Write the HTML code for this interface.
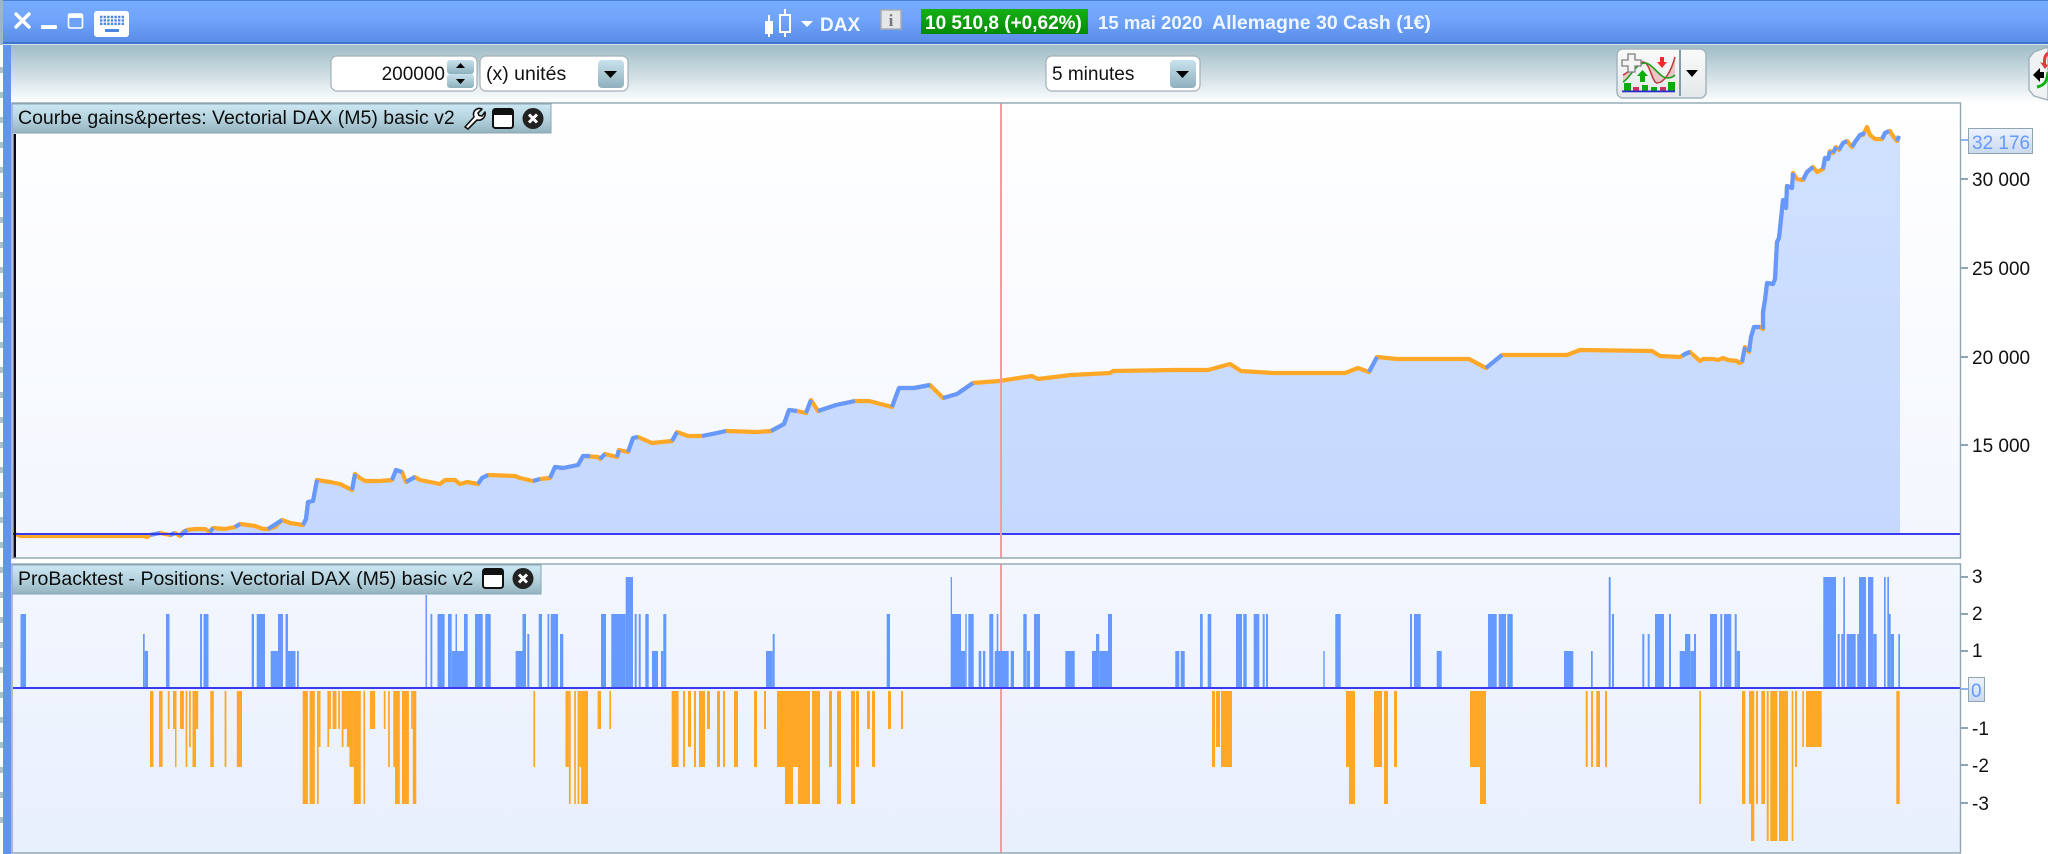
<!DOCTYPE html>
<html><head><meta charset="utf-8"><title>DAX</title>
<style>
html,body{margin:0;padding:0;background:#fff;width:2048px;height:854px;overflow:hidden}
svg{display:block;position:absolute;left:0;top:0}
text{font-family:"Liberation Sans",sans-serif}
</style></head><body>
<svg width="2048" height="854" viewBox="0 0 2048 854" xmlns="http://www.w3.org/2000/svg">
<defs>
<linearGradient id="tb" x1="0" y1="0" x2="0" y2="1"><stop offset="0" stop-color="#78acff"/><stop offset=".45" stop-color="#70a4fa"/><stop offset="1" stop-color="#588ce6"/></linearGradient>
<linearGradient id="tl" x1="0" y1="0" x2="0" y2="1"><stop offset="0" stop-color="#9fbcc6"/><stop offset=".55" stop-color="#d2e0e5"/><stop offset="1" stop-color="#fff"/></linearGradient>
<linearGradient id="p1" x1="0" y1="0" x2="0" y2="1"><stop offset="0" stop-color="#fff"/><stop offset="1" stop-color="#f2f6fe"/></linearGradient>
<linearGradient id="p2" x1="0" y1="0" x2="0" y2="1"><stop offset="0" stop-color="#f3f7fe"/><stop offset="1" stop-color="#e8effd"/></linearGradient>
<linearGradient id="ar" x1="0" y1="0" x2="0" y2="1"><stop offset="0" stop-color="#d0e1ff"/><stop offset="1" stop-color="#c5d8fe"/></linearGradient>
<linearGradient id="lg" x1="0" y1="0" x2="0" y2="1"><stop offset="0" stop-color="#cbe7f3"/><stop offset=".5" stop-color="#b5d3de"/><stop offset="1" stop-color="#93b3bf"/></linearGradient>
<linearGradient id="bt" x1="0" y1="0" x2="0" y2="1"><stop offset="0" stop-color="#c8e2ed"/><stop offset="1" stop-color="#8db0bd"/></linearGradient>
<linearGradient id="gr" x1="0" y1="0" x2="0" y2="1"><stop offset="0" stop-color="#16b016"/><stop offset="1" stop-color="#058a05"/></linearGradient>
<linearGradient id="lb" x1="0" y1="0" x2="0" y2="1"><stop offset="0" stop-color="#edf3fd"/><stop offset="1" stop-color="#c9d9ee"/></linearGradient>
<linearGradient id="ib" x1="0" y1="0" x2="0" y2="1"><stop offset="0" stop-color="#fafafa"/><stop offset="1" stop-color="#e4e8ea"/></linearGradient>
</defs>

<!-- left strip -->
<rect x="0" y="0" width="3" height="854" fill="#fff"/>
<rect x="0" y="0" width="3" height="45" fill="#9db8c2"/>
<path d="M0 70h3M0 95h3M0 120h3M0 145h3M0 170h3M0 195h3M0 220h3M0 245h3M0 270h3M0 295h3M0 320h3M0 345h3M0 370h3M0 395h3M0 420h3M0 445h3M0 470h3M0 495h3M0 520h3M0 545h3M0 570h3M0 595h3M0 620h3M0 645h3M0 670h3M0 695h3M0 720h3M0 745h3M0 770h3M0 795h3M0 820h3" stroke="#8aa7b8" stroke-width="6" fill="none" opacity=".7"/>
<rect x="3" y="43" width="8" height="811" fill="#5f95ec"/>
<rect x="11" y="45" width="1" height="809" fill="#e6edf5"/>

<!-- title bar -->
<rect x="3" y="0" width="2045" height="43" fill="url(#tb)"/>
<rect x="3" y="0" width="2045" height="1" fill="#4a7fd6"/>
<rect x="3" y="42" width="2045" height="2" fill="#3f74cc"/>
<rect x="3" y="44" width="2045" height="1" fill="#d4e2f0"/>

<path d="M16 14L29 27M29 14L16 27" stroke="#fff" stroke-width="3.4" stroke-linecap="round"/>
<rect x="41" y="25" width="16" height="4" rx="1" fill="#fff"/>
<rect x="68.500" y="14" width="14" height="14" rx="1.500" fill="#6ea2f6" stroke="#fff" stroke-width="1.600"/>
<rect x="68" y="14" width="15" height="4" fill="#fff"/>
<rect x="94" y="11" width="35" height="26" rx="3" fill="#fff"/>
<path d="M100 17h2.400M103.600 17h2.400M107.200 17h2.400M110.800 17h2.400M114.400 17h2.400M118 17h2.400M121.600 17h2.400M100 20.400h2.400M103.600 20.400h2.400M107.200 20.400h2.400M110.800 20.400h2.400M114.400 20.400h2.400M118 20.400h2.400M121.600 20.400h2.400M100 23.800h2.400M103.600 23.800h2.400M107.200 23.800h2.400M110.800 23.800h2.400M114.400 23.800h2.400M118 23.800h2.400M121.600 23.800h2.400" stroke="#4f86e0" stroke-width="2.400" fill="none"/>
<rect x="105" y="29" width="14" height="3" fill="#4f86e0"/>

<path d="M769 15V37" stroke="#fff" stroke-width="2"/>
<rect x="765" y="21" width="8" height="13" fill="#fff"/>
<rect x="780" y="15" width="10" height="17" fill="none" stroke="#fff" stroke-width="2"/>
<path d="M785 9V15M785 32V37" stroke="#fff" stroke-width="2"/>
<path d="M801 21h12l-6 6z" fill="#fff"/>
<text x="820" y="31" font-size="19" font-weight="bold" fill="#f4f8ff">DAX</text>
<rect x="881" y="10" width="20" height="19" fill="#e4e6e8" stroke="#a9adb3" stroke-width="1.500"/>
<text x="891" y="26" font-size="17" font-weight="bold" text-anchor="middle" fill="#777" style="font-family:'Liberation Serif',serif">i</text>
<rect x="921" y="9" width="167" height="25" fill="url(#gr)"/>
<text x="925" y="29" font-size="19" font-weight="bold" fill="#fff">10 510,8 (+0,62%)</text>
<text x="1098" y="29" font-size="18.600" font-weight="bold" fill="#f0f6ff">15 mai 2020</text>
<text x="1212" y="29" font-size="19.500" font-weight="bold" fill="#f0f6ff">Allemagne 30 Cash (1€)</text>

<!-- toolbar -->
<rect x="11" y="45" width="2037" height="58" fill="url(#tl)"/>
<rect x="331" y="56" width="146" height="35" rx="6" fill="#fff" stroke="#a4b0b6" stroke-width="1.200"/>
<text x="445" y="80" font-size="19" text-anchor="end" fill="#111">200000</text>
<rect x="447" y="60" width="27" height="14" rx="3" fill="url(#bt)"/>
<rect x="447" y="74" width="27" height="14" rx="3" fill="url(#bt)"/>
<path d="M456 68h9l-4.500-5zM456 79h9l-4.500 5z" fill="#000"/>
<rect x="480" y="56" width="148" height="35" rx="6" fill="#fff" stroke="#a4b0b6" stroke-width="1.200"/>
<text x="486" y="80" font-size="19.500" fill="#111">(x) unités</text>
<rect x="598" y="60" width="26" height="28" rx="4" fill="url(#bt)"/>
<path d="M604 71h13l-6.500 7z" fill="#000"/>
<rect x="1046" y="56" width="154" height="35" rx="6" fill="#fff" stroke="#a4b0b6" stroke-width="1.200"/>
<text x="1052" y="80" font-size="19" fill="#111">5 minutes</text>
<rect x="1170" y="60" width="26" height="28" rx="4" fill="url(#bt)"/>
<path d="M1176 71h13l-6.500 7z" fill="#000"/>

<rect x="1617" y="49" width="89" height="49" rx="6" fill="url(#ib)" stroke="#a4b6be" stroke-width="1.500"/>
<rect x="1679" y="50" width="2" height="46" fill="#7f9daa"/>
<path d="M1686 70h12l-6 7z" fill="#000"/>
<g>
<path d="M1623 75C1630 72 1636 62 1643 62C1650 62 1652 83 1657 83C1664 83 1671 72 1675 57L1675 75C1671 78 1668 78 1667 78C1660 78 1652 63 1645 63C1636 63 1630 78 1623 82Z" fill="#e8bcbc" opacity=".8"/>
<path d="M1623 75C1630 72 1636 62 1643 62C1650 62 1652 83 1657 83C1664 83 1671 72 1675 57" fill="none" stroke="#c0383a" stroke-width="1.500"/>
<path d="M1623 82C1630 78 1636 63 1645 63C1652 63 1660 78 1667 78C1670 78 1673 77 1675 75" fill="none" stroke="#1da01d" stroke-width="1.600"/>
<path d="M1628 54h7v6h6v6h-6v6h-7v-6h-6v-6h6z" fill="#f4f4f4" stroke="#7f7f7f" stroke-width="1.300"/>
<path d="M1640 82h5v-6h3l-5.500-6-5.500 6h3z" fill="#0cae0c"/>
<path d="M1660 57h4v5h3l-5 6-5-6h3z" fill="#ee2a2a"/>
<rect x="1624" y="83" width="7" height="8" fill="#0caa0c"/><rect x="1633" y="87" width="6" height="4" fill="#d0305a"/><rect x="1642" y="85" width="6" height="6" fill="#0caa0c"/><rect x="1651" y="87" width="6" height="4" fill="#0caa0c"/><rect x="1660" y="87" width="6" height="4" fill="#d0305a"/><rect x="1668" y="82" width="7" height="9" fill="#0caa0c"/>
<rect x="1622" y="90.500" width="53" height="1.800" fill="#2a2ad0"/>
</g>
<path d="M2048 47L2034 52L2029 58V90L2034 96L2048 100Z" fill="#eef2f3" stroke="#9fb2ba" stroke-width="1.400"/>
<path d="M2033 75l7-7v14z" fill="#000"/>
<rect x="2040" y="72" width="4" height="6" fill="#000"/>
<path d="M2048 53C2044 56 2044 62 2045 67" stroke="#e23a3a" stroke-width="3" fill="none"/>
<path d="M2040 62l5 7 3-4z" fill="#e23a3a"/>
<path d="M2048 72C2047 80 2046 85 2037 87" stroke="#11b011" stroke-width="3" fill="none"/>

<!-- panel 1 -->
<rect x="12" y="103" width="1948" height="455" fill="url(#p1)"/>
<path d="M16 534L20 536L143 536L147 537L150 535L160 533L170 535L175 533L180 536L183 532L187 530L195 529L205 529L210 532L213 528L225 529L235 527L240 524L255 526L263 529L268 529L275 527L282 520L290 523L303 525L306 519L308 502L313 501L317 480L330 482L340 484L352 490L355 474L360 478L365 481L380 481L392 480L396 470L402 472L406 482L415 477L420 480L440 484L445 480L455 480L460 484L467 482L478 484L482 478L488 475L515 476L520 478L533 481L540 479L550 478L555 467L563 468L578 465L583 456L598 457L600 459L605 454L617 457L619 450L628 452L633 438L638 437L652 443L672 441L677 432L688 436L702 436L717 433L726 431L757 432L771 431L784 424L789 410L797 411L806 413L811 400L818 411L836 405L855 401L869 401L892 407L899 388L914 388L930 385L943 398L957 394L973 383L999 381L1032 376L1038 379L1071 375L1110 373L1113 371L1175 370L1208 370L1230 364L1241 371L1273 373L1345 373L1358 368L1369 372L1377 357L1397 359L1469 359L1486 368L1502 355L1521 355L1567 355L1580 350L1652 351L1660 356L1680 357L1685 354L1690 352L1700 361L1703 359L1713 359L1718 360L1723 358L1728 360L1737 361L1739 363L1742 362L1745 347L1749 352L1751 337L1754 327L1760 327L1763 329L1763 312L1765 300L1767 283L1773 284L1775 279L1777 242L1779 238L1783 200L1786 208L1787 186L1792 188L1793 173L1797 179L1803 180L1807 172L1813 167L1817 172L1823 169L1825 158L1828 159L1830 151L1833 153L1836 147L1839 150L1843 143L1847 141L1852 147L1855 142L1860 135L1863 135L1867 127L1870 135L1875 139L1882 139L1885 133L1890 131L1893 136L1897 141L1899 136L1900 136L1900 534L16 534Z" fill="url(#ar)"/>
<path d="M16 534L20 536L143 536L147 537L150 535L160 533L170 535L175 533L180 536L183 532L187 530L195 529L205 529L210 532L213 528L225 529L235 527L240 524L255 526L263 529L268 529L275 527L282 520L290 523L303 525L306 519L308 502L313 501L317 480L330 482L340 484L352 490L355 474L360 478L365 481L380 481L392 480L396 470L402 472L406 482L415 477L420 480L440 484L445 480L455 480L460 484L467 482L478 484L482 478L488 475L515 476L520 478L533 481L540 479L550 478L555 467L563 468L578 465L583 456L598 457L600 459L605 454L617 457L619 450L628 452L633 438L638 437L652 443L672 441L677 432L688 436L702 436L717 433L726 431L757 432L771 431L784 424L789 410L797 411L806 413L811 400L818 411L836 405L855 401L869 401L892 407L899 388L914 388L930 385L943 398L957 394L973 383L999 381L1032 376L1038 379L1071 375L1110 373L1113 371L1175 370L1208 370L1230 364L1241 371L1273 373L1345 373L1358 368L1369 372L1377 357L1397 359L1469 359L1486 368L1502 355L1521 355L1567 355L1580 350L1652 351L1660 356L1680 357L1685 354L1690 352L1700 361L1703 359L1713 359L1718 360L1723 358L1728 360L1737 361L1739 363L1742 362L1745 347L1749 352L1751 337L1754 327L1760 327L1763 329L1763 312L1765 300L1767 283L1773 284L1775 279L1777 242L1779 238L1783 200L1786 208L1787 186L1792 188L1793 173L1797 179L1803 180L1807 172L1813 167L1817 172L1823 169L1825 158L1828 159L1830 151L1833 153L1836 147L1839 150L1843 143L1847 141L1852 147L1855 142L1860 135L1863 135L1867 127L1870 135L1875 139L1882 139L1885 133L1890 131L1893 136L1897 141L1899 136" fill="none" stroke="#ffa726" stroke-width="4.200" stroke-linejoin="round"/>
<path d="M150 535L160 533M170 535L175 533M180 536L187 530M210 532L213 528M235 527L240 524M268 529L282 520M303 525L306 519L308 502L313 501L317 480M352 490L355 474M392 480L396 470L402 472M406 482L415 477M478 484L482 478L488 475M533 481L540 479M550 478L555 467L563 468L578 465L583 456L590 456M600 459L605 454M617 457L619 450M628 452L633 438L638 437M672 441L677 432M702 436L717 433L726 431M771 431L784 424L789 410L797 411M806 413L811 400M818 411L836 405L855 401M892 407L899 388L914 388L930 385M943 398L957 394L973 383M1369 372L1377 357M1486 368L1502 355M1682 356L1685 354L1690 352M1742 362L1745 347M1749 352L1751 337L1754 327L1760 327M1763 329L1763 312L1765 300L1767 283L1773 284L1775 279L1777 242L1779 238L1783 200L1786 208L1787 186L1792 188L1793 173M1803 180L1807 172L1813 167M1823 169L1825 158L1828 159L1830 151M1833 153L1836 147M1839 150L1843 143L1847 141M1852 147L1855 142L1860 135L1865 133M1882 139L1885 133L1889 131M1897 141L1899 136" fill="none" stroke="#6699ff" stroke-width="4.200" stroke-linejoin="round"/>
<rect x="13" y="533" width="1947" height="2" fill="#3a3aee"/>
<rect x="13.500" y="134" width="2.500" height="424" fill="#0b0b0b"/>
<rect x="1000" y="103" width="2" height="455" fill="#f79a9f"/>
<rect x="12" y="103" width="1948.500" height="455" fill="none" stroke="#8fa5b0" stroke-width="1.400"/>

<!-- legend 1 -->
<rect x="12" y="104" width="539" height="29" fill="url(#lg)" stroke="#8aa6b2" stroke-width="1"/>
<text x="18" y="124" font-size="19.500" fill="#0c0c0c">Courbe gains&amp;pertes: Vectorial DAX (M5) basic v2</text>
<path d="M465 127L474 117C472 111 477 107 482 109L478 113L479 115.500L482 116L485 112C486 118 481 121 477 120L468 129Z" fill="#fff" stroke="#111" stroke-width="1.600" stroke-linejoin="round"/>
<rect x="493" y="109" width="20" height="19" rx="2.500" fill="#fff" stroke="#111" stroke-width="2"/>
<rect x="493" y="109" width="20" height="6" fill="#111"/>
<circle cx="533" cy="118.500" r="10.500" fill="#222"/>
<path d="M529 114.500l8 8M537 114.500l-8 8" stroke="#fff" stroke-width="3"/>

<!-- panel 2 -->
<rect x="12" y="564" width="1948" height="289" fill="url(#p2)"/>
<rect x="1000" y="564" width="2" height="289" fill="#f79a9f"/>
<g fill="#6699ff">
<path d="M425.500 595H427V688H425.500zM625.700 577H633V688H625.700zM950.700 577H952V688H950.700zM1608.700 577H1610.700V688H1608.700zM1823.300 577H1836V688H1823.300zM1843.300 577H1845V688H1843.300zM1859 577H1866V688H1859zM1868 577H1873.300V688H1868zM1884 577H1885.700V688H1884zM1887.300 577H1889V688H1887.300z"/>
<path d="M20.500 614H26V688H20.500zM166 614H169.500V688H166zM200 614H202V688H200zM203.500 614H208.500V688H203.500zM251.700 614H254V688H251.700zM256.700 614H265V688H256.700zM278 614H283V688H278zM285.500 614H288V688H285.500zM430.500 614H432.300V688H430.500zM437.500 614H444.600V688H437.500zM448 614H451.700V688H448zM455.500 614H457V688H455.500zM464 614H467.700V688H464zM475 614H482.700V688H475zM485.300 614H490.700V688H485.300zM522.500 614H526V688H522.500zM538.700 614H542V688H538.700zM547.500 614H549.300V688H547.500zM550.700 614H558V688H550.700zM601 614H606V688H601zM611.300 614H625.700V688H611.300zM634.700 614H636.700V688H634.700zM638.700 614H640.700V688H638.700zM645.300 614H648.700V688H645.300zM663.300 614H666.300V688H663.300zM886.700 614H890V688H886.700zM952 614H961V688H952zM965.300 614H966.700V688H965.300zM968.300 614H973.700V688H968.300zM989.300 614H993.300V688H989.300zM996.700 614H998.300V688H996.700zM1023.300 614H1026.700V688H1023.300zM1034 614H1040V688H1034zM1108 614H1112V688H1108zM1200 614H1202.700V688H1200zM1207.700 614H1211.300V688H1207.700zM1236 614H1242V688H1236zM1243.300 614H1246.700V688H1243.300zM1253.700 614H1259.300V688H1253.700zM1262.700 614H1264.700V688H1262.700zM1266 614H1268V688H1266zM1335.300 614H1340.700V688H1335.300zM1410 614H1412V688H1410zM1414 614H1420.700V688H1414zM1488 614H1496.700V688H1488zM1498.700 614H1506V688H1498.700zM1507.300 614H1512.700V688H1507.300zM1612 614H1614V688H1612zM1655 614H1664V688H1655zM1669 614H1671V688H1669zM1710 614H1717V688H1710zM1720.300 614H1722.300V688H1720.300zM1724 614H1731.300V688H1724zM1734.700 614H1736.700V688H1734.700zM1889 614H1890.700V688H1889z"/>
<path d="M143 634H144.700V688H143zM527.300 634H529.300V688H527.300zM560 634H563.300V688H560zM772.700 634H774.700V688H772.700zM1096 634H1099.300V688H1096zM1642.300 634H1644.300V688H1642.300zM1647.700 634H1649.700V688H1647.700zM1685 634H1690.300V688H1685zM1694 634H1696V688H1694zM1837.700 634H1839.700V688H1837.700zM1841.300 634H1843.300V688H1841.300zM1846.700 634H1855.700V688H1846.700zM1857.300 634H1859V688H1857.300zM1873.300 634H1876.700V688H1873.300zM1890.700 634H1894V688H1890.700zM1898.300 634H1900V688H1898.300z"/>
<path d="M144.700 651H148V688H144.700zM270.700 651H278V688H270.700zM288 651H295.500V688H288zM297 651H298.800V688H297zM451.700 651H455.500V688H451.700zM457 651H464V688H457zM515.600 651H522.500V688H515.600zM652 651H658V688H652zM661 651H663.300V688H661zM766 651H772.700V688H766zM961 651H965.300V688H961zM978.700 651H981.300V688H978.700zM983 651H985.300V688H983zM994.700 651H1008.700V688H994.700zM1010.700 651H1014V688H1010.700zM1027 651H1030V688H1027zM1065.300 651H1074.700V688H1065.300zM1092 651H1096V688H1092zM1099.300 651H1108V688H1099.300zM1175.300 651H1179.300V688H1175.300zM1180.700 651H1184.700V688H1180.700zM1323.300 651H1324.700V688H1323.300zM1436.700 651H1441.700V688H1436.700zM1564 651H1573.300V688H1564zM1591 651H1592.700V688H1591zM1679.700 651H1685V688H1679.700zM1690.300 651H1694V688H1690.300zM1736.700 651H1740V688H1736.700z"/>
</g>
<g fill="#ffa726">
<path d="M167.800 691H169.600V729H167.800zM173 691H175V729H173zM180 691H183.900V729H180zM196 691H198.200V729H196zM329.100 691H330.900V729H329.100zM332.600 691H336.500V729H332.600zM338.200 691H340V729H338.200zM343.500 691H346.900V729H343.500zM369.900 691H375.100V729H369.900zM383.800 691H385.500V729H383.800zM411.100 691H412.800V729H411.100zM597.600 691H601V729H597.600zM609.300 691H611V729H609.300zM707 691H710V729H707zM764 691H766V729H764zM867 691H870V729H867zM888 691H891V729H888zM901 691H903V729H901z"/>
<path d="M189 691H190.800V747H189zM318.700 691H320.500V747H318.700zM327.400 691H329.100V747H327.400zM341.700 691H343.500V747H341.700zM346.900 691H349.500V747H346.900zM688 691H691V747H688zM1216 691H1220V747H1216zM1802.300 691H1804V747H1802.300zM1806 691H1821.700V747H1806z"/>
<path d="M150 691H153.500V767H150zM159 691H162.600V767H159zM175 691H176.500V767H175zM185.600 691H187.300V767H185.600zM192.500 691H196V767H192.500zM210.300 691H213.800V767H210.300zM224.600 691H226.400V767H224.600zM236.800 691H242V767H236.800zM349.500 691H353.900V767H349.500zM388.100 691H389.800V767H388.100zM393.300 691H395V767H393.300zM533.400 691H535.100V767H533.400zM565.500 691H568.900V767H565.500zM579.300 691H581.100V767H579.300zM671.700 691H678.600V767H671.700zM683 691H685V767H683zM694 691H696V767H694zM699 691H705V767H699zM717 691H720V767H717zM723 691H725V767H723zM734 691H738V767H734zM754 691H757V767H754zM777 691H810V767H777zM829 691H832V767H829zM856 691H859V767H856zM872 691H875V767H872zM1212 691H1215V767H1212zM1221 691H1232V767H1221zM1346 691H1352V767H1346zM1374 691H1382V767H1374zM1394 691H1397V767H1394zM1470 691H1484V767H1470zM1585.700 691H1587.700V767H1585.700zM1591 691H1593V767H1591zM1596.300 691H1600V767H1596.300zM1605 691H1607V767H1605zM1795 691H1797V767H1795z"/>
<path d="M302.700 691H307.900V804H302.700zM309.600 691H314.800V804H309.600zM317 691H318.700V804H317zM353.900 691H360.800V804H353.900zM363.400 691H365.100V804H363.400zM395 691H399.800V804H395zM402 691H408.900V804H402zM412.800 691H416.300V804H412.800zM568.900 691H570.700V804H568.900zM574.200 691H575.900V804H574.200zM577.600 691H579.300V804H577.600zM581.100 691H588V804H581.100zM785 691H793V804H785zM798 691H810V804H798zM812 691H820V804H812zM837 691H841V804H837zM851 691H855V804H851zM1349 691H1355V804H1349zM1384 691H1388V804H1384zM1480 691H1486V804H1480zM1699.300 691H1701V804H1699.300zM1742 691H1745.300V804H1742zM1749 691H1751V804H1749zM1756 691H1758V804H1756zM1761.300 691H1765V804H1761.300zM1896.300 691H1899.700V804H1896.300z"/>
<path d="M1751 691H1754.300V841H1751zM1766.700 691H1768.700V841H1766.700zM1770.300 691H1777.300V841H1770.300zM1779 691H1788V841H1779zM1791.700 691H1793.300V841H1791.700z"/>
</g>
<rect x="13" y="687" width="1947" height="2" fill="#3a3aee"/>
<rect x="12" y="564" width="1948.500" height="289" fill="none" stroke="#8fa5b0" stroke-width="1.400"/>

<!-- legend 2 -->
<rect x="12" y="565" width="529" height="29" fill="url(#lg)" stroke="#8aa6b2" stroke-width="1"/>
<text x="18" y="585" font-size="19.500" fill="#0c0c0c">ProBacktest - Positions: Vectorial DAX (M5) basic v2</text>
<rect x="483" y="569" width="20" height="19" rx="2.500" fill="#fff" stroke="#111" stroke-width="2"/>
<rect x="483" y="569" width="20" height="6" fill="#111"/>
<circle cx="523" cy="578.500" r="10.500" fill="#222"/>
<path d="M519 574.500l8 8M527 574.500l-8 8" stroke="#fff" stroke-width="3"/>

<!-- axes -->
<path d="M1961 179h7M1961 268h7M1961 357h7M1961 445h7M1961 577h7M1961 614h7M1961 651h7M1961 728h7M1961 765h7M1961 803h7" stroke="#8fa5b0" stroke-width="2" fill="none"/>
<path d="M1961 140h7M1961 689h7" stroke="#8fb4f5" stroke-width="2" fill="none"/>
<g font-size="19" fill="#111">
<text x="1972" y="186">30 000</text>
<text x="1972" y="275">25 000</text>
<text x="1972" y="364">20 000</text>
<text x="1972" y="452">15 000</text>
<text x="1972" y="583">3</text>
<text x="1972" y="620">2</text>
<text x="1972" y="657">1</text>
<text x="1972" y="735">-1</text>
<text x="1972" y="772">-2</text>
<text x="1972" y="810">-3</text>
</g>
<rect x="1968.500" y="128.500" width="64" height="25" fill="url(#lb)" stroke="#8fa5b0" stroke-width="1"/>
<text x="1972" y="149" font-size="19" fill="#6699ff">32 176</text>
<rect x="1968.500" y="677.500" width="16" height="24" fill="url(#lb)" stroke="#8fa5b0" stroke-width="1"/>
<text x="1971" y="697" font-size="19" fill="#6699ff">0</text>
</svg>
</body></html>
